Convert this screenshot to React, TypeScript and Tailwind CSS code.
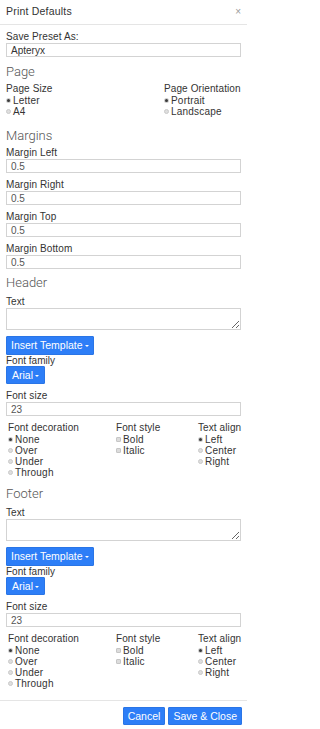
import React from "react";

const Radio = ({ label, checked = false }: { label: string; checked?: boolean }) => (
  <div className="flex items-center h-[11px] leading-[11px] text-[10px] text-[#333] tracking-[0.2px] whitespace-nowrap">
    <span
      className={`w-[5px] h-[5px] rounded-full mr-[2px] flex items-center justify-center ${
        checked ? "bg-[#cfcfcf]" : "bg-[#dedede] border border-[#cacaca]"
      }`}
    >
      {checked && <span className="w-[3px] h-[3px] rounded-full bg-[#3a3a3a]" />}
    </span>
    {label}
  </div>
);

const Check = ({ label }: { label: string }) => (
  <div className="flex items-center h-[11px] leading-[11px] text-[10px] text-[#333] tracking-[0.2px] whitespace-nowrap">
    <span className="w-[5px] h-[5px] rounded-[1px] mr-[2px] bg-[#dcdcdc] border border-[#c6c6c6]" />
    {label}
  </div>
);

const Label = ({ children, className = "" }: { children: React.ReactNode; className?: string }) => (
  <div className={`text-[10px] leading-[12px] text-[#333] tracking-[0.1px] whitespace-nowrap ${className}`}>
    {children}
  </div>
);

const Heading = ({ children, className = "" }: { children: React.ReactNode; className?: string }) => (
  <div className={`text-[13px] leading-[16px] font-light text-[#555] font-['Roboto',sans-serif] ${className}`}>
    {children}
  </div>
);

const Input = ({ value, dark = false }: { value: string; dark?: boolean }) => (
  <div
    className={`h-[14px] border border-[#d3d3d3] bg-white px-[4px] flex items-center text-[10px] ${
      dark ? "text-[#333]" : "text-[#555]"
    }`}
  >
    {value}
  </div>
);

const Caret = () => (
  <span className="ml-[2px] mt-[1px] w-0 h-0 border-l-[2px] border-r-[2px] border-t-[2px] border-l-transparent border-r-transparent border-t-white" />
);

const BlueButton = ({ children, className = "" }: { children: React.ReactNode; className?: string }) => (
  <div
    className={`flex w-fit items-center bg-[#2d7ef7] border border-[#2a75e6] rounded-[1px] text-white text-[10.5px] leading-none px-[4px] whitespace-nowrap ${className}`}
  >
    {children}
  </div>
);

const Section = ({ title, first }: { title: string; first?: boolean }) => (
  <div>
    <Heading className={first ? "mt-[6px]" : "mt-[8px]"}>{title}</Heading>
    <Label className="mt-[5px]">Text</Label>
    <textarea
      readOnly
      className="block w-full h-[22px] border border-[#d3d3d3] bg-white outline-none"
    />
    <BlueButton className="mt-[6px] h-[19px]">
      Insert Template
      <Caret />
    </BlueButton>
    <div className="text-[10px] leading-[11px] text-[#333]">Font family</div>
    <BlueButton className="h-[18px] px-[5px]">
      Arial
      <Caret />
    </BlueButton>
    <Label className="mt-[6px]">Font size</Label>
    <Input value="23" />
    <div className="mt-[6px] pl-[2px] grid grid-cols-[108px_82px_1fr]">
      <div>
        <Label>Font decoration</Label>
        <Radio label="None" checked />
        <Radio label="Over" />
        <Radio label="Under" />
        <Radio label="Through" />
      </div>
      <div>
        <Label>Font style</Label>
        <Check label="Bold" />
        <Check label="Italic" />
      </div>
      <div>
        <Label>Text align</Label>
        <Radio label="Left" checked />
        <Radio label="Center" />
        <Radio label="Right" />
      </div>
    </div>
  </div>
);

export default function App() {
  return (
    <div className="w-[247px] h-[729px] bg-white font-['Liberation_Sans',Arial,sans-serif] overflow-hidden">
      <div className="h-[25px] flex items-center justify-between pl-[6px] pr-[6px] border-b border-[#e5e5e5]">
        <span className="text-[10.5px] font-medium text-[#333] tracking-[0.2px]">Print Defaults</span>
        <span className="text-[10px] text-[#999] leading-none">×</span>
      </div>

      <div className="px-[6px] pt-[6px] pb-[11px]">
        <Label>Save Preset As:</Label>
        <Input value="Apteryx" dark />

        <Heading className="mt-[7px]">Page</Heading>
        <div className="mt-[3px] grid grid-cols-[158px_1fr]">
          <div>
            <Label>Page Size</Label>
            <Radio label="Letter" checked />
            <Radio label="A4" />
          </div>
          <div>
            <Label>Page Orientation</Label>
            <Radio label="Portrait" checked />
            <Radio label="Landscape" />
          </div>
        </div>

        <Heading className="mt-[11px]">Margins</Heading>
        <div className="mt-[3px] flex flex-col gap-[6px]">
          {["Margin Left", "Margin Right", "Margin Top", "Margin Bottom"].map((m) => (
            <div key={m}>
              <Label>{m}</Label>
              <Input value="0.5" />
            </div>
          ))}
        </div>

        <Section title="Header" first />
        <Section title="Footer" />
      </div>

      <div className="border-t border-[#e5e5e5] pt-[6px] pr-[5px] flex justify-end gap-[3px]">
        <BlueButton className="h-[18px] px-[4px]">Cancel</BlueButton>
        <BlueButton className="h-[18px] px-[4px]">Save &amp; Close</BlueButton>
      </div>
    </div>
  );
}
